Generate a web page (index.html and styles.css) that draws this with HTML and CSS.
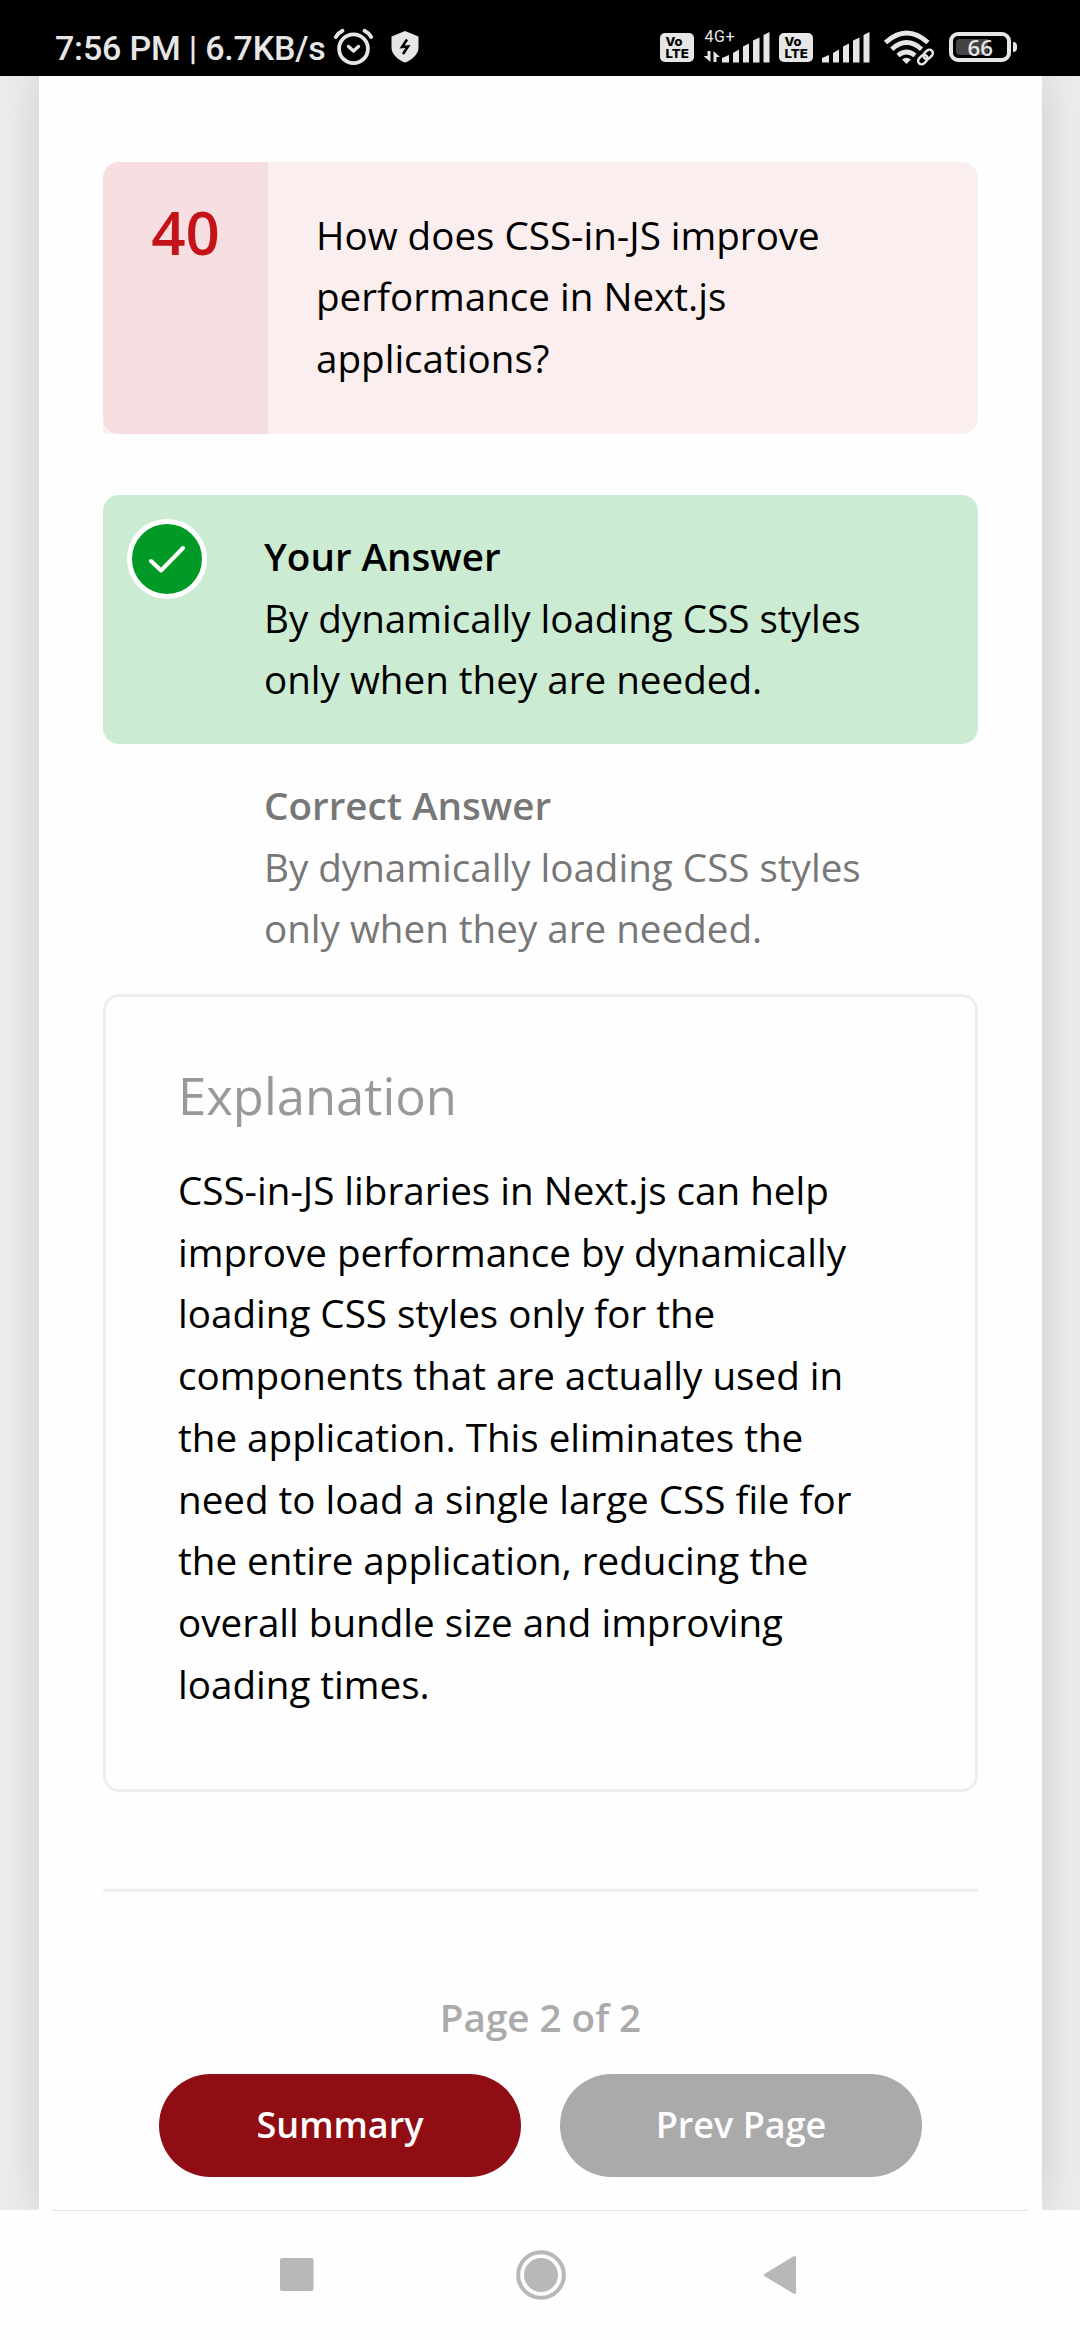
FILE: index.html
```html
<!DOCTYPE html>
<html lang="en">
<head>
<meta charset="utf-8">
<title>Quiz review</title>
<link rel="stylesheet" href="styles.css">
</head>
<body>
<header class="status">
  <span class="status-text">7:56 PM | 6.7KB/s</span>
  <svg class="status-left" width="88" height="40" viewBox="332 27 88 40" fill="none" stroke="#e6e6e6">
    <circle cx="353.5" cy="48.7" r="14.4" stroke-width="3.8"/>
    <path d="M348.5 46.500 L353.500 51 L358.5 46.500" stroke-width="3.400" stroke-linecap="round" stroke-linejoin="round"/>
    <path d="M335.800 37 Q338 33 342.500 30.800 M371.200 37 Q369 33 364.500 30.800" stroke-width="3.800" stroke-linecap="round"/>
    <path d="M405 31 L418.500 36.500 V48 C418.500 54 412 60 405 62.500 C398 60 391.500 54 391.500 48 V36.500 Z" fill="#e6e6e6" stroke="none"/>
    <path d="M407 39.500 L402 47 L408 46.500 L403 54" stroke="#000" stroke-width="2.500"/>
  </svg>
  <svg class="status-right" width="362" height="40" viewBox="658 27 362 40" fill="#e6e6e6">
    <rect x="660" y="33" width="34" height="29" rx="5"/>
    <text class="volte" x="665.500" y="46" textLength="17" lengthAdjust="spacingAndGlyphs">Vo</text>
    <text class="volte" x="665.500" y="58.300" textLength="23.500" lengthAdjust="spacingAndGlyphs">LTE</text>
    <text class="net" x="704.500" y="41.700" textLength="30">4G+</text>
    <path d="M707.500 51 h3 v11 l-7 -6 h4z M713.500 62 v-11 l6.500 6 h-3.500 v5z"/>
    <g id="bars"><path d="M722 62.500 V58 L729 55 V62.500Z M733 62.500 V53 L739 49.500 V62.500Z M743 62.500 V46.500 L749 43.500 V62.500Z M753 62.500 V40.500 L759.500 37.500 V62.500Z M763.500 62.500 V35 L769.500 32 V62.500Z"/></g>
    <rect x="779" y="33" width="34" height="29" rx="5"/>
    <text class="volte" x="784.500" y="46" textLength="17" lengthAdjust="spacingAndGlyphs">Vo</text>
    <text class="volte" x="784.500" y="58.300" textLength="23.500" lengthAdjust="spacingAndGlyphs">LTE</text>
    <use href="#bars" x="100"/>
    <g fill="none" stroke="#e6e6e6" stroke-width="4.800">
      <path d="M885.500 42.500 Q906.500 23.500 928 42.500"/>
      <path d="M891.800 49.200 Q906.500 36 921.500 49.200"/>
      <path d="M898 55.500 Q906.500 48.500 915 55.500"/>
    </g>
    <path d="M902 59.500 Q906.500 55.800 911 59.500 L906.500 64Z"/>
    <g fill="none" transform="rotate(-45 925.500 57)">
      <rect x="915" y="52.500" width="21" height="9" rx="4.500" fill="#000" stroke="#000" stroke-width="4"/>
      <g stroke="#e6e6e6" stroke-width="2.400"><rect x="916.500" y="53.500" width="10.500" height="7" rx="3.500"/><rect x="924" y="53.500" width="10.500" height="7" rx="3.500"/></g>
    </g>
    <rect x="951" y="34" width="58" height="26" rx="7" fill="none" stroke="#e6e6e6" stroke-width="4"/>
    <path d="M956 43 q0 -4 4 -4 H988 V55 H960 q-4 0 -4 -4z" fill="#444"/>
    <text class="batt" x="967.500" y="55.800" textLength="25.500" lengthAdjust="spacingAndGlyphs">66</text>
    <path d="M1013 42 q4 0 4 4 v2 q0 4 -4 4z"/>
  </svg>
</header>
<main class="page">
  <section class="question">
    <div class="number">40</div>
    <p class="question-text">How does CSS-in-JS improve<br>performance in Next.js<br>applications?</p>
  </section>
  <section class="answer">
    <svg class="check" width="80" height="80" viewBox="0 0 80 80"><circle cx="40" cy="40" r="37.500" fill="#029a26" stroke="#fff" stroke-width="5"/><path d="M24 42 L34 51.500 L56 29" fill="none" stroke="#fff" stroke-width="4" stroke-linecap="round" stroke-linejoin="round"/></svg>
    <div><h3 class="label">Your Answer</h3><p>By dynamically loading CSS styles<br>only when they are needed.</p></div>
  </section>
  <section class="correct">
    <h3 class="label">Correct Answer</h3><p>By dynamically loading CSS styles<br>only when they are needed.</p>
  </section>
  <section class="explanation">
    <h2 class="title">Explanation</h2>
    <p>CSS-in-JS libraries in Next.js can help<br>improve performance by dynamically<br>loading CSS styles only for the<br>components that are actually used in<br>the application. This eliminates the<br>need to load a single large CSS file for<br>the entire application, reducing the<br>overall bundle size and improving<br>loading times.</p>
  </section>
  <hr class="rule">
  <p class="pager">Page 2 of 2</p>
  <div class="buttons"><button class="btn primary">Summary</button><button class="btn">Prev Page</button></div>
</main>
<nav class="navbar">
  <svg width="34" height="52" viewBox="0 0 34 52"><rect y="9" width="33.500" height="33" rx="2" fill="#b8b8b8"/></svg>
  <svg class="home" width="52" height="52" viewBox="0 0 52 52"><circle cx="26" cy="26" r="22.800" fill="none" stroke="#b8b8b8" stroke-width="4"/><circle cx="26" cy="26" r="17" fill="#b8b8b8"/></svg>
  <svg width="34" height="52" viewBox="0 0 34 52"><path d="M2.500 26 L31.500 8.500 V43.500Z" fill="#b8b8b8" stroke="#b8b8b8" stroke-width="3" stroke-linejoin="round"/></svg>
</nav>
</body>
</html>
```

FILE: styles.css
```css
* { box-sizing: border-box; margin: 0; padding: 0; }
body { width: 1080px; height: 2340px; overflow: hidden; display: flex; flex-direction: column; background: #ececec; color: #000; font: 38.6px/61.7px "Open Sans", "Noto Sans", sans-serif; }
.status { height: 76px; flex: none; background: #000; color: #e6e6e6; display: flex; padding: 27px 60px 0 55px; position: relative; z-index: 2; }
.status-text { width: 277px; flex: none; margin-top: 1px; font: 500 34px/41px Roboto, sans-serif; letter-spacing: -0.2px; white-space: nowrap; }
.status-left { flex: none; }
.status-right { margin-left: auto; flex: none; }
.volte { font: 800 12px Inter, sans-serif; fill: #000; }
.net { font: 400 16px Roboto, sans-serif; }
.batt { font: 600 22px "Open Sans", sans-serif; }
.page { width: 1003px; height: 2134px; flex: none; margin-left: 39px; padding: 86px 64px 0; background: #fefefe; box-shadow: 0 0 40px rgba(0, 0, 0, 0.14); }
.question { height: 272px; display: flex; background: #faeeee; border-radius: 16px 16px 16px 0; }
.number { width: 165px; flex: none; background: #f6dee1; border-radius: 16px 0 0 16px; padding-top: 29px; text-align: center; color: #c21319; font-size: 60px; line-height: 82px; font-weight: 600; }
.question-text { padding: 42.5px 0 0 48px; }
.answer { height: 249px; margin-top: 61px; background: #ccebd3; border-radius: 16px; padding: 31px 0 0 24px; display: flex; gap: 57px; }
.check { flex: none; margin-top: -7px; }
.label { font-size: inherit; font-weight: 600; }
.correct { height: 250px; padding: 31px 0 0 161px; color: #777; }
.explanation { height: 798px; border: 3px solid #eee; border-radius: 16px; padding: 62.5px 0 0 72px; }
.title { font-size: 50.8px; line-height: 72px; font-weight: 400; color: #999; margin-bottom: 28.5px; }
.rule { border: 0; height: 3px; background: #eee; margin-top: 97px; }
.pager { margin-top: 95px; text-align: center; font-weight: 600; color: #aaa; }
.buttons { display: flex; justify-content: center; gap: 39px; margin-top: 25.3px; }
.btn { width: 362px; height: 103px; border: 0; border-radius: 52px; background: #aaa; color: #fff; font: 600 36px/50px "Open Sans", sans-serif; padding-bottom: 2px; }
.primary { background: #900e13; }
.navbar { position: relative; z-index: 2; height: 130px; flex: none; background: #fefefe; display: flex; justify-content: space-between; align-items: flex-start; padding: 39px 283px 0 279.500px; }
.home { margin-left: 5px; }
.navbar::before { content: ""; position: absolute; top: 0; left: 52px; right: 52px; height: 1px; background: #e2e2e2; }
```
